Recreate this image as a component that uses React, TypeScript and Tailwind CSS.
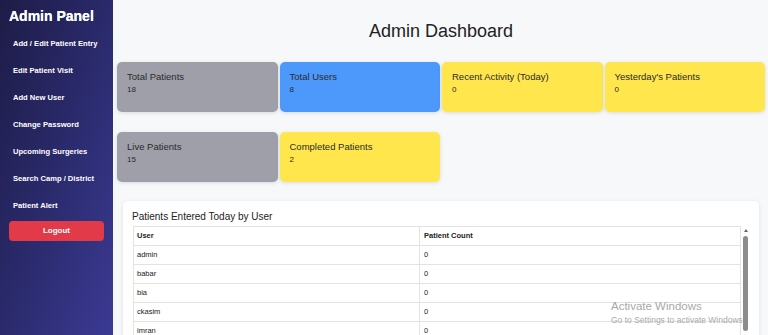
import React from "react";

const menu = [
  "Add / Edit Patient Entry",
  "Edit Patient Visit",
  "Add New User",
  "Change Password",
  "Upcoming Surgeries",
  "Search Camp / District",
  "Patient Alert",
];

const rows = ["admin", "babar", "bia", "ckasim", "imran"];

function Card({ title, value, color }: { title: string; value: string; color: string }) {
  return (
    <div className={`h-[50px] rounded-[5px] pl-[10px] pt-[8px] shadow-[0_1px_4px_rgba(0,0,0,0.12)] ${color}`}>
      <div className="text-[9.5px] leading-[14px] text-[#2b2b2b]">{title}</div>
      <div className="text-[8px] leading-[12px] text-[#2b2b2b]">{value}</div>
    </div>
  );
}

export default function App() {
  return (
    <div
      className="relative flex h-[335px] w-[768px] overflow-hidden"
      style={{ fontFamily: '"Liberation Sans", Arial, sans-serif' }}
    >
      <aside className="w-[113px] shrink-0 bg-gradient-to-br from-[#1e1c47] via-[#2a2a6c] to-[#3b3a94] px-[9px] pt-[6px]">
        <h1 className="text-[14px] font-bold leading-[20px] text-white [text-shadow:0_0_0.4px_#fff]">Admin Panel</h1>
        <nav className="mt-[4px]">
          {menu.map((m) => (
            <div key={m} className="h-[27px] pl-[4px] text-[7.6px] font-bold leading-[27px] text-white whitespace-nowrap">
              {m}
            </div>
          ))}
        </nav>
        <button className="mt-[2px] block h-[20px] w-[95px] rounded-[4px] bg-[#e23a48] text-[8px] font-bold text-white">
          Logout
        </button>
      </aside>

      <main className="flex-1 bg-[#f7f8fa] pl-[4px] pr-[3px] pt-[19px]">
        <h2 className="text-center text-[18px] leading-[24px] text-[#222]">Admin Dashboard</h2>
        <div className="mt-[19px] grid grid-cols-4 gap-[2px]">
          <Card title="Total Patients" value="18" color="bg-[#9e9fa8]" />
          <Card title="Total Users" value="8" color="bg-[#4d98fb]" />
          <Card title="Recent Activity (Today)" value="0" color="bg-[#fee64c]" />
          <Card title="Yesterday's Patients" value="0" color="bg-[#fee64c]" />
        </div>
        <div className="mt-[20px] grid grid-cols-4 gap-[2px]">
          <Card title="Live Patients" value="15" color="bg-[#9e9fa8]" />
          <Card title="Completed Patients" value="2" color="bg-[#fee64c]" />
        </div>

        <section className="mx-[6px] mt-[19px] rounded-[5px] bg-white pl-[9px] pr-[9px] pt-[9px] shadow-[0_1px_4px_rgba(0,0,0,0.1)]">
          <div className="text-[10px] leading-[14px] text-[#222]">Patients Entered Today by User</div>
          <div className="mt-[2px] flex">
            <table className="ml-[1px] flex-1 border-collapse text-[7.5px] text-[#222]">
              <thead>
                <tr className="h-[19px]">
                  <th className="w-[286px] border border-[#e3e3e3] pl-[3px] text-left font-bold">User</th>
                  <th className="border border-[#e3e3e3] pl-[4px] text-left font-bold">Patient Count</th>
                </tr>
              </thead>
              <tbody>
                {rows.map((r) => (
                  <tr key={r} className="h-[19px]">
                    <td className="border border-[#e3e3e3] pl-[3px]">{r}</td>
                    <td className="border border-[#e3e3e3] pl-[4px]">0</td>
                  </tr>
                ))}
              </tbody>
            </table>
            <div className="relative w-[9px] shrink-0">
              <div className="mx-auto mt-[3px] h-0 w-0 border-x-[2.5px] border-b-[3px] border-x-transparent border-b-[#666]" />
              <div className="mx-auto mt-[4px] h-[95px] w-[5px] rounded-full bg-[#8c8c8c]" />
            </div>
          </div>
        </section>
      </main>

      <div className="pointer-events-none absolute left-[611px] top-[299px] text-[#a9a9a9]">
        <div className="text-[11.5px] leading-[15px]">Activate Windows</div>
        <div className="text-[8.5px] leading-[12px]">Go to Settings to activate Windows.</div>
      </div>
    </div>
  );
}
